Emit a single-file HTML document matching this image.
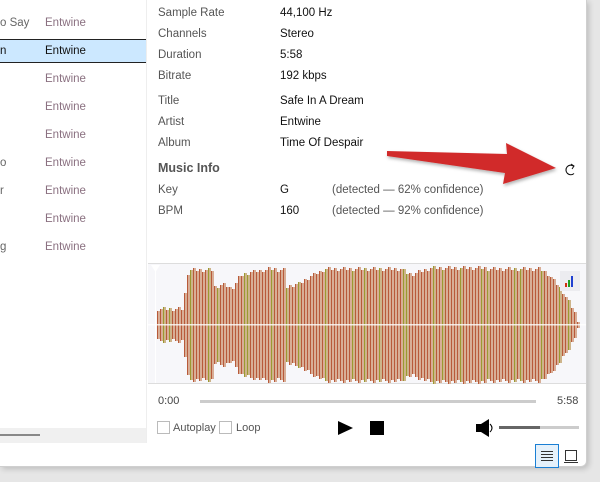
<!DOCTYPE html>
<html><head><meta charset="utf-8"><style>
*{margin:0;padding:0;box-sizing:border-box}
body{width:600px;height:482px;background:#e6e6e6;font-family:"Liberation Sans","DejaVu Sans",sans-serif;font-size:11.5px;position:relative;overflow:hidden}
#win{position:absolute;left:0;top:0;width:587px;height:467px;background:#fff;border-right:1px solid #cfcfcf;border-bottom:1px solid #cfcfcf;border-bottom-right-radius:6px;box-shadow:2px 2px 6px rgba(0,0,0,.18)}
.t{position:absolute;white-space:nowrap;line-height:14px}
.ar{color:#8a7080}
.lb{color:#555}
.v{color:#111}
</style></head><body>
<div id="win">
<div style="position:absolute;left:146px;top:0;width:1px;height:443px;background:#eee"></div>
<div style="position:absolute;left:0;top:39px;width:146px;height:24px;background:#cce8ff;border-top:1px solid #222;border-bottom:1px solid #222"></div>
<div class="t" style="left:0;top:16px;color:#666">o Say</div>
<div class="t" style="left:0;top:44px;color:#111">n</div>
<div class="t" style="left:0;top:156px;color:#666">o</div>
<div class="t" style="left:0;top:184px;color:#666">r</div>
<div class="t" style="left:0;top:240px;color:#666">g</div>
<div class="t ar" style="left:45px;top:16px">Entwine</div>
<div class="t" style="left:45px;top:44px;color:#111">Entwine</div>
<div class="t ar" style="left:45px;top:72px">Entwine</div>
<div class="t ar" style="left:45px;top:100px">Entwine</div>
<div class="t ar" style="left:45px;top:128px">Entwine</div>
<div class="t ar" style="left:45px;top:156px">Entwine</div>
<div class="t ar" style="left:45px;top:184px">Entwine</div>
<div class="t ar" style="left:45px;top:212px">Entwine</div>
<div class="t ar" style="left:45px;top:240px">Entwine</div>
<div style="position:absolute;left:0;top:428px;width:146px;height:15px;background:#f0f0f0"></div>
<div style="position:absolute;left:0;top:434px;width:40px;height:2px;background:#888"></div>

<div class="t lb" style="left:158px;top:6px">Sample Rate</div><div class="t v" style="left:280px;top:6px">44,100 Hz</div>
<div class="t lb" style="left:158px;top:27px">Channels</div><div class="t v" style="left:280px;top:27px">Stereo</div>
<div class="t lb" style="left:158px;top:48px">Duration</div><div class="t v" style="left:280px;top:48px">5:58</div>
<div class="t lb" style="left:158px;top:69px">Bitrate</div><div class="t v" style="left:280px;top:69px">192 kbps</div>
<div class="t lb" style="left:158px;top:94px">Title</div><div class="t v" style="left:280px;top:94px">Safe In A Dream</div>
<div class="t lb" style="left:158px;top:115px">Artist</div><div class="t v" style="left:280px;top:115px">Entwine</div>
<div class="t lb" style="left:158px;top:136px">Album</div><div class="t v" style="left:280px;top:136px">Time Of Despair</div>
<div class="t" style="left:158px;top:161px;font-weight:bold;font-size:12.5px;color:#555">Music Info</div>
<div class="t lb" style="left:158px;top:183px">Key</div><div class="t v" style="left:280px;top:183px">G</div><div class="t lb" style="left:332px;top:183px">(detected — 62% confidence)</div>
<div class="t lb" style="left:158px;top:204px">BPM</div><div class="t v" style="left:280px;top:204px">160</div><div class="t lb" style="left:332px;top:204px">(detected — 92% confidence)</div>

<svg style="position:absolute;left:0;top:0" width="600" height="482">
<defs><filter id="sh"><feDropShadow dx="1" dy="2" stdDeviation="1.5" flood-opacity=".3"/></filter></defs>
<polygon points="387,151 507,154 506,143 556,168 503,184 505,173 387,156" fill="#d12a2a" filter="url(#sh)"/>
<path d="M573.5,166 A4.8,4.8 0 1 0 574,173.5" fill="none" stroke="#111" stroke-width="1.1"/>
<path d="M571,164 L574,166 L572,169" fill="none" stroke="#111" stroke-width="1"/>
</svg>

<div style="position:absolute;left:148px;top:263px;width:438px;height:121px;background:#f7f7fa;border-top:1px solid #ddd;border-bottom:1px solid #ddd"></div>
<svg id="wf" style="position:absolute;left:0;top:0" width="600" height="482"></svg>

<div class="t" style="left:158px;top:394px;color:#444;font-size:11px">0:00</div>
<div style="position:absolute;left:200px;top:400px;width:336px;height:3px;background:#ccc"></div>
<div class="t" style="left:557px;top:394px;color:#444;font-size:11px">5:58</div>
<div style="position:absolute;left:157px;top:421px;width:13px;height:13px;border:1px solid #bbb"></div>
<div class="t" style="left:173px;top:421px;color:#555;font-size:11px">Autoplay</div>
<div style="position:absolute;left:219px;top:421px;width:13px;height:13px;border:1px solid #bbb"></div>
<div class="t" style="left:236px;top:421px;color:#555;font-size:11px">Loop</div>
<svg style="position:absolute;left:0;top:0" width="600" height="482">
<polygon points="338,421 353,428 338,435" fill="#000"/>
<rect x="370" y="421" width="14" height="14" fill="#000"/>
<rect x="476" y="424" width="6" height="8" fill="#000"/>
<polygon points="481,424 489,419 489,437 481,432" fill="#000"/>
<path d="M490,424 Q494,428 490,432" stroke="#000" fill="none"/>
<rect x="499" y="426" width="80" height="3" fill="#ccc"/>
<rect x="499" y="426" width="41" height="3" fill="#666"/>
<rect x="535.5" y="444.5" width="23" height="23" fill="#e5f1fb" stroke="#1a7fd4"/>
<path d="M541,451.5h12M541,454.5h12M541,457.5h12M541,460.5h12" stroke="#333"/>
<rect x="565.5" y="450.5" width="11" height="10" fill="none" stroke="#333"/>
<path d="M564,462.5h14" stroke="#333"/>
</svg>
</div>
<script>
var s=document.getElementById('wf'),h='';
var env=[[157,16],[183,16],[185,46],[188,55],[212,55],[214,38],[222,41],[230,36],[236,43],[240,50],[252,53],[268,56],[283,55],[285,38],[300,42],[312,50],[325,56],[400,56],[410,50],[430,57],[540,56],[548,50],[560,36],[570,20],[578,3]];
function amp(x){for(var i=0;i<env.length-1;i++){var a=env[i],b=env[i+1];if(x>=a[0]&&x<=b[0])return a[1]+(b[1]-a[1])*(x-a[0])/(b[0]-a[0]||1);}return 0;}
var k=0;
for(var x=157;x<578;x+=3){var a=Math.round(amp(x)+((k*7)%5)-2);if(a<2)a=2;k++;
var g=(k%9==3||k%13==5);
var lc=g?'#cdb48a':'#d8ae96',dc=g?'#9a9a30':'#b85a3a';
h+='<rect x="'+x+'" y="'+(325-a)+'" width="3" height="'+(2*a)+'" fill="'+lc+'"/><rect x="'+x+'" y="'+(325-a)+'" width="1" height="'+(2*a)+'" fill="'+dc+'"/>';}
h+='<rect x="148" y="324" width="438" height="1.5" fill="#fff" opacity=".8"/>';
h+='<rect x="155" y="265" width="1" height="118" fill="#fff"/><polygon points="151,265 160,265 155.5,272" fill="#fff"/>';
h+='<rect x="560" y="271" width="20" height="20" fill="#ececf0"/><rect x="565" y="283" width="2" height="4" fill="#d03010"/><rect x="568" y="280" width="2" height="7" fill="#20a020"/><rect x="571" y="276" width="2" height="11" fill="#2040d0"/>';
s.innerHTML=h;
</script>
</body></html>
